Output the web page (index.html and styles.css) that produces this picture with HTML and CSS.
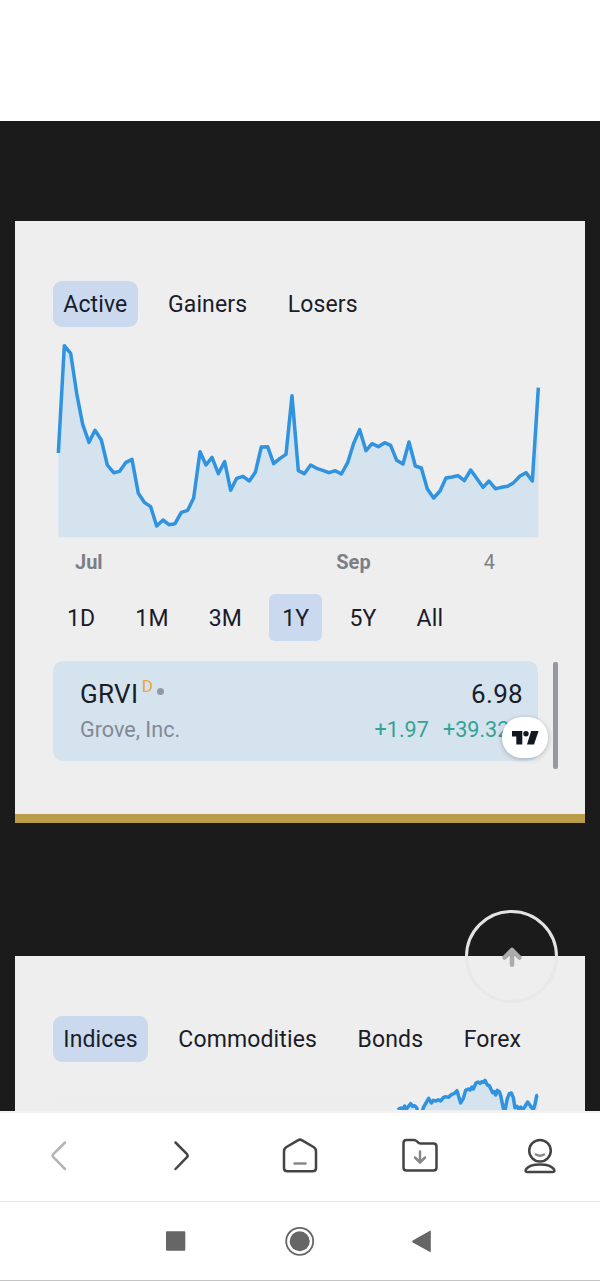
FILE: index.html
```html
<!DOCTYPE html>
<html lang="en">
<head>
<meta charset="utf-8">
<title>Market overview</title>
<link rel="stylesheet" href="styles.css">
</head>
<body>
<div class="screen">
  <div class="top-space"></div>
  <main class="page">
    <section class="card">
      <div class="tabs">
        <span class="tab active">Active</span><span class="tab">Gainers</span><span class="tab">Losers</span>
      </div>
      <svg class="chart" viewBox="-75 0 1710 630">
        <path class="grid" d="M40 298H1494"/>
        <path class="area" d="M55 607V350L73 32 92 55 110 175 128 268 147 322 165 286 184 315 202 390 221 413 239 409 258 382 276 373 295 475 314 503 332 515 350 573 369 555 387 569 405 566 424 532 443 526 461 489 480 350 498 390 516 367 535 416 554 380 572 466 590 430 609 424 628 438 646 412 664 336 683 335 701 386 720 370 738 358 756 182 775 407 793 416 812 390 830 400 848 406 867 413 886 407 904 417 923 383 941 325 959 284 978 347 996 326 1015 335 1034 323 1052 331 1070 376 1089 387 1107 321 1126 393 1144 399 1162 462 1181 489 1200 468 1218 429 1236 426 1254 422 1273 437 1292 405 1310 430 1329 457 1347 438 1366 461 1384 457 1403 454 1421 443 1440 423 1458 413 1477 438 1495 158V607Z"/>
        <polyline class="line" points="55,354 73,32 92,55 110,175 128,268 147,322 165,286 184,315 202,390 221,413 239,409 258,382 276,373 295,475 314,503 332,515 350,573 369,555 387,569 405,566 424,532 443,526 461,489 480,350 498,390 516,367 535,416 554,380 572,466 590,430 609,424 628,438 646,412 664,336 683,335 701,386 720,370 738,358 756,182 775,407 793,416 812,390 830,400 848,406 867,413 886,407 904,417 923,383 941,325 959,284 978,347 996,326 1015,335 1034,323 1052,331 1070,376 1089,387 1107,321 1126,393 1144,399 1162,462 1181,489 1200,468 1218,429 1236,426 1254,422 1273,437 1292,405 1310,430 1329,457 1347,438 1366,461 1384,457 1403,454 1421,443 1440,423 1458,413 1477,438 1495,158"/>
      </svg>
      <div class="axis"><b>Jul</b><b>Sep</b><span>4</span></div>
      <div class="ranges">
        <span class="range">1D</span><span class="range">1M</span><span class="range">3M</span><span class="range active">1Y</span><span class="range">5Y</span><span class="range">All</span>
      </div>
      <div class="quote">
        <div class="quote-line">
          <span class="symbol">GRVI</span><span class="delay">D</span><i class="dot"></i><span class="price">6.98</span>
        </div>
        <div class="quote-line sub">
          <span class="company">Grove, Inc.</span><span class="change">+1.97</span><span class="percent">+39.32%</span>
        </div>
        <div class="badge">
          <svg width="27" height="14" viewBox="0 0 27 14"><path d="M0 0H10.300V13.500H4.300V5.500H0Z"/><circle cx="14" cy="2.700" r="2.700"/><path d="M19.200 0H26.600L22 13.500H15Z"/></svg>
        </div>
      </div>
      <div class="scrollbar"></div>
    </section>
    <section class="card second">
      <div class="tabs">
        <span class="tab active">Indices</span><span class="tab">Commodities</span><span class="tab">Bonds</span><span class="tab">Forex</span>
      </div>
      <svg class="chart-small" viewBox="-1095 0 1710 135">
        <path class="grid dim" d="M-980 109H474"/>
        <path class="area" d="M55 145V134L74 124 92 116 104 122 114 140H126L146 100 154 114 168 108 182 108 197 95 215 88 231 77 242 114 257 76 276 66 288 54 315 46 328 62 338 83 352 76 362 92 375 136 388 86 394 84 405 128 428 132 443 111 460 134 473 90V145Z"/>
        <polyline class="line" points="53,134 62,129 68,133 74,123 79,132 84,126 92,116 98,124 104,122 110,128 114,142 126,142 130,128 146,100 154,114 160,106 168,108 175,104 182,108 190,98 197,95 205,97 215,88 222,86 231,77 242,114 250,100 257,76 265,72 270,75 276,66 280,72 288,54 294,51 300,55 306,50 311,52 315,46 322,60 328,62 333,73 338,83 343,80 347,90 352,76 358,80 362,92 370,130 375,136 382,100 388,86 394,84 400,98 405,128 411,124 416,132 422,126 428,134 434,126 443,111 452,124 460,134 465,118 470,92 474,90"/>
      </svg>
    </section>
    <div class="to-top">
      <svg width="20" height="20" viewBox="0 0 20 20"><path d="M10 17.700V3M2.600 10.500L10 3L17.400 10.500"/></svg>
    </div>
  </main>
  <nav class="browser-nav">
    <svg class="pale" viewBox="0 0 40 40"><path d="M25 6.500L13.300 18.200Q12 19.700 13.300 21.100L25 33"/></svg>
    <svg viewBox="0 0 40 40"><path d="M15.500 6.500L27 18.200Q28.300 19.700 27 21.100L15.500 33"/></svg>
    <svg viewBox="0 0 40 40"><path d="M17.800 4.400Q20 2.800 22.200 4.400L33.500 11Q36 12.500 36 15.500V32Q36 35.300 32.700 35.300H7.300Q4 35.300 4 32V15.500Q4 12.500 6.500 11Z"/><path class="soft" d="M14.500 27.500H25.500"/></svg>
    <svg viewBox="0 0 40 40"><path d="M6.500 4H14Q15.500 4 17 5.400L18.500 6.700Q19.500 7.500 21 7.500H33.500Q36.500 7.500 36.500 10.500V31.500Q36.500 34.500 33.500 34.500H6.500Q3.500 34.500 3.500 31.500V7Q3.500 4 6.500 4Z"/><path class="soft" d="M20 15.500V26M15 21.500L20 26.500L25 21.500"/></svg>
    <svg viewBox="0 0 40 40"><circle cx="20" cy="14.800" r="10.800"/><path class="soft" d="M16 18.500Q20 21 24 18.500"/><path d="M7 36H33Q35.200 36 34 33.300C31.500 29.700 26 28.500 20 28.500S8.500 29.700 6 33.300Q4.800 36 7 36Z"/></svg>
  </nav>
  <div class="system-nav">
    <svg viewBox="0 0 32 32"><rect x="6" y="6.300" width="19.300" height="19.500" rx="1"/></svg>
    <svg viewBox="0 0 32 32"><circle cx="15.700" cy="16.300" r="10"/><circle class="ring" cx="15.700" cy="16.300" r="13.500"/></svg>
    <svg viewBox="0 0 32 32"><path d="M22.800 6V26.500Q22.800 27.500 22 27L4.700 17.500Q3.500 16.500 4.700 15.500L22 5.700Q22.800 5.300 22.800 6Z"/></svg>
  </div>
</div>
</body>
</html>
```

FILE: styles.css
```css
* { box-sizing: border-box; }
body {
  margin: 0;
  background: #fff;
  font-family: Roboto, "Liberation Sans", sans-serif;
  color: #1a1c29;
}
.screen {
  width: 600px;
  height: 1281px;
  display: flex;
  flex-direction: column;
  overflow: hidden;
  border-bottom: 1px solid #c4c4c4;
}
.top-space { height: 121px; flex: none; }
.page {
  position: relative;
  height: 989.5px;
  flex: none;
  padding: 100px 15px 0;
  background: #1b1b1b;
  overflow: hidden;
}
.card {
  position: relative;
  height: 602px;
  padding-top: 60px;
  background: #eee;
  border-bottom: 9px solid #bb9c4b;
}
.card.second {
  height: 155px;
  margin-top: 133px;
  border-bottom: 0;
  overflow: hidden;
}
.tabs {
  display: flex;
  gap: 20px;
  padding-left: 38px;
}
.tab, .range {
  height: 46px;
  line-height: 46px;
  padding: 1px 10.3px 0;
  border-radius: 9px;
  font-size: 23px;
  letter-spacing: .12px;
  white-space: nowrap;
}
.tab.active, .range.active { background: #cad9ee; }
.chart {
  display: block;
  width: 570px;
  height: 210px;
  margin-top: 8px;
}
.chart-small {
  display: block;
  width: 570px;
  height: 45px;
  margin-top: 3px;
}
.area { fill: #d5e3ef; }
.line {
  fill: none;
  stroke: #2f93e0;
  stroke-width: 10.5;
  stroke-linejoin: round;
}
.grid { stroke: #ebf0f4; stroke-width: 3; }
.grid.dim { stroke: #e9ebed; }
.axis {
  display: flex;
  height: 34px;
  line-height: 34px;
  padding-left: 60px;
  color: #7c7e88;
  font-size: 20px;
}
.axis b:nth-child(2) { margin-left: 233.6px; }
.axis span { margin-left: 113px; }
.ranges {
  display: flex;
  gap: 14px;
  padding: 15px 0 0 38.8px;
}
.range {
  height: 47px;
  line-height: 47px;
  padding: 1px 13.1px 0;
  border-radius: 6px;
}
.quote {
  position: relative;
  width: 485px;
  height: 100px;
  margin: 20px 0 0 38px;
  padding: 15px 15px 0 27px;
  border-radius: 10px;
  background: #d5e3ef;
}
.quote-line {
  display: flex;
  align-items: center;
  height: 36px;
  font-size: 26px;
}
.quote-line.sub { font-size: 21.6px; height: 34px; }
.symbol { letter-spacing: .3px; }
.delay {
  margin: -17px 0 0 3.5px;
  color: #e9a73b;
  font-size: 17px;
}
.dot {
  width: 7px;
  height: 7px;
  margin: -5px 0 0 4.5px;
  border-radius: 50%;
  background: #9298a3;
}
.price { margin-left: auto; letter-spacing: .3px; }
.company { color: #838994; }
.change { margin-left: auto; color: #35a294; }
.percent { margin-left: 14px; margin-right: -2.2px; color: #35a294; }
.badge {
  position: absolute;
  left: 449px;
  top: 56px;
  width: 46px;
  height: 41px;
  display: flex;
  align-items: center;
  justify-content: center;
  border-radius: 20px;
  background: #fff;
  box-shadow: 0 1px 5px rgba(0, 0, 0, .25);
}
.badge svg { fill: #131722; }
.scrollbar {
  position: absolute;
  left: 538px;
  top: 441px;
  width: 5px;
  height: 107px;
  border-radius: 2px;
  background: #9698a1;
}
.to-top {
  position: absolute;
  left: 465px;
  top: 789px;
  width: 93px;
  height: 93px;
  display: flex;
  align-items: center;
  justify-content: center;
  border: 3px solid rgba(232, 232, 232, .98);
  border-radius: 50%;
}
.to-top svg {
  fill: none;
  stroke: #ababab;
  stroke-width: 4.6;
  stroke-linecap: round;
  stroke-linejoin: round;
}
.browser-nav {
  display: grid;
  grid-template-columns: repeat(5, 120px);
  align-items: center;
  justify-items: center;
  height: 91.5px;
  flex: none;
  padding-bottom: 1.5px;
  border-top: 2px solid #f2f2f2;
  border-bottom: 1px solid #e8e8e8;
}
.browser-nav svg {
  width: 40px;
  height: 40px;
  fill: none;
  stroke: #444;
  stroke-width: 2.5;
  stroke-linecap: round;
}
.browser-nav .pale { stroke: #b4b4b4; }
.browser-nav .soft { stroke: #888; }
.system-nav {
  flex: 1;
  display: flex;
  align-items: center;
  justify-content: center;
  gap: 92px;
}
.system-nav svg { width: 32px; height: 32px; fill: #666; }
.system-nav .ring { fill: none; stroke: #666; stroke-width: 1.8; }
```
